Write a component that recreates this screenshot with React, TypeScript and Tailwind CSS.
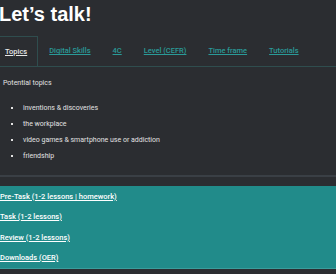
import React from 'react';

const tabs = ['Topics', 'Digital Skills', '4C', 'Level (CEFR)', 'Time frame', 'Tutorials'];
const topics = ['inventions & discoveries', 'the workplace', 'video games & smartphone use or addiction', 'friendship'];
const sections = ['Pre-Task (1-2 lessons | homework)', 'Task (1-2 lessons)', 'Review (1-2 lessons)', 'Downloads (OER)'];

export default function App() {
    return (
        <div className="w-[336px] h-[274px] overflow-hidden bg-[#2b2d31] text-white" style={{ fontFamily: 'Roboto, sans-serif' }}>
            <h1 className="-ml-[1px] pt-[1px] h-[36px] text-[20px] font-bold leading-[26px]" style={{ fontFamily: '"Liberation Sans", Arial, sans-serif' }}>
                Let’s talk!
            </h1>
            <div className="flex h-[31px] border-b border-[#2f4d4e]">
                {tabs.map((t, i) => (
                    <div
                        key={t}
                        className={
                            i === 0
                                ? 'flex items-center pl-[5px] pr-[10px] border-t border-r border-[#2f4d4e] text-[7.5px] font-medium text-[#e6e6e6] underline'
                                : 'flex items-center px-[11px] text-[7.5px] font-medium text-[#2a9a98] underline'
                        }
                    >
                        {t}
                    </div>
                ))}
            </div>
            <div className="pl-[3px] pt-[11px] h-[108px] text-[7px] text-[#e2e2e2]">
                <p className="leading-[10px]">Potential topics</p>
                <ul className="mt-[12px] pl-[8px]">
                    {topics.map((t) => (
                        <li key={t} className="flex items-center h-[16px]">
                            <span className="w-[2px] h-[2px] bg-[#e2e2e2] mr-[10px]" />
                            {t}
                        </li>
                    ))}
                </ul>
            </div>
            <div className="h-[2px] bg-[#3a3f45]" />
            <div className="h-[9px]" />
            <div className="h-[83px] bg-[#218b8a] border-b border-[#3a9d9c] flex flex-col">
                {sections.map((s) => (
                    <div key={s} className="h-[21px] flex items-center text-[7.5px] font-medium text-white underline">
                        {s}
                    </div>
                ))}
            </div>
        </div>
    );
}
